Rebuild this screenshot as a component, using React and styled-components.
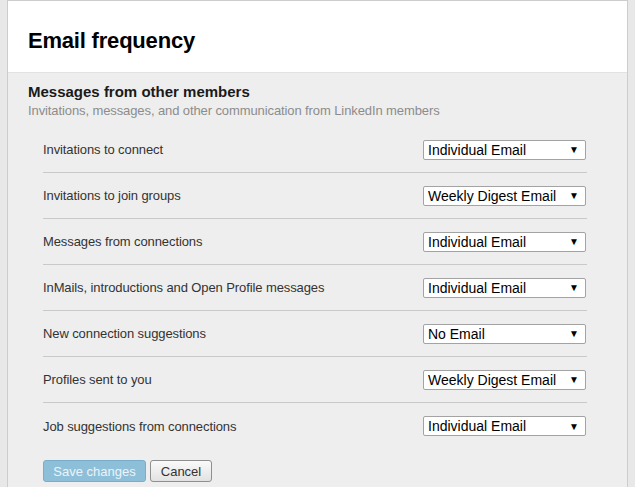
import React from "react";
import styled, { createGlobalStyle } from "styled-components";

const GlobalStyle = createGlobalStyle`
  html, body {
    margin: 0;
    padding: 0;
    background: #e6e6e6;
    font-family: Arial, "Liberation Sans", Helvetica, sans-serif;
  }
`;

const rows = [
  { label: "Invitations to connect", value: "Individual Email" },
  { label: "Invitations to join groups", value: "Weekly Digest Email" },
  { label: "Messages from connections", value: "Individual Email" },
  { label: "InMails, introductions and Open Profile messages", value: "Individual Email" },
  { label: "New connection suggestions", value: "No Email" },
  { label: "Profiles sent to you", value: "Weekly Digest Email" },
  { label: "Job suggestions from connections", value: "Individual Email" },
];

export default function App() {
  return (
    <>
      <GlobalStyle />
      <Page>
        <Panel>
          <Header>
            <Title>Email frequency</Title>
          </Header>
          <Section>
            <SectionTitle>Messages from other members</SectionTitle>
            <SectionSub>
              Invitations, messages, and other communication from LinkedIn members
            </SectionSub>
            <List>
              {rows.map((r, i) => (
                <Row key={r.label} last={i === rows.length - 1}>
                  <Label>{r.label}</Label>
                  <Select>
                    <span>{r.value}</span>
                    <Arrow>▼</Arrow>
                  </Select>
                </Row>
              ))}
            </List>
            <Actions>
              <SaveButton>Save changes</SaveButton>
              <CancelButton>Cancel</CancelButton>
            </Actions>
          </Section>
        </Panel>
      </Page>
    </>
  );
}

const Page = styled.div`
  width: 635px;
  height: 487px;
  overflow: hidden;
  padding-left: 7px;
  box-sizing: border-box;
  background: #e8e8e8;
`;

const Panel = styled.div`
  width: 621px;
  height: 100%;
  box-sizing: border-box;
  border: 1px solid #cdcdcd;
  border-bottom: none;
  background: #eeeeee;
  display: flex;
  flex-direction: column;
`;

const Header = styled.div`
  height: 72px;
  flex-shrink: 0;
  background: #ffffff;
  border-bottom: 1px solid #e2e2e2;
  display: flex;
  align-items: center;
  padding-left: 20px;
  box-sizing: border-box;
`;

const Title = styled.h1`
  margin: 0;
  font-size: 22px;
  font-weight: bold;
  color: #000;
  letter-spacing: -0.2px;
  padding-top: 8px;
`;

const Section = styled.div`
  padding: 10px 40px 0 20px;
`;

const SectionTitle = styled.div`
  font-size: 15px;
  font-weight: bold;
  color: #1a1a1a;
  line-height: 18px;
`;

const SectionSub = styled.div`
  font-size: 13px;
  color: #8c8c8c;
  line-height: 18px;
  margin-top: 1px;
  letter-spacing: -0.1px;
`;

const List = styled.div`
  margin-left: 15px;
  margin-top: 7px;
`;

const Row = styled.div`
  height: 46px;
  box-sizing: border-box;
  display: flex;
  align-items: center;
  justify-content: space-between;
  border-bottom: ${(p) => (p.last ? "none" : "1px solid #c9c9c9")};
`;

const Label = styled.div`
  font-size: 13px;
  color: #333;
  letter-spacing: -0.1px;
`;

const Select = styled.div`
  width: 163px;
  height: 20px;
  box-sizing: border-box;
  background: #fff;
  border: 1px solid #a3a3a3;
  border-radius: 2px;
  display: flex;
  align-items: center;
  justify-content: space-between;
  padding: 0 6px 0 4px;
  font-size: 14px;
  color: #000;
  margin-right: 1px;
`;

const Arrow = styled.span`
  font-size: 10px;
  color: #000;
`;

const Actions = styled.div`
  display: flex;
  gap: 4px;
  margin-left: 15px;
  margin-top: 11px;
`;

const BaseButton = styled.button`
  height: 22px;
  box-sizing: border-box;
  font-family: Arial, "Liberation Sans", sans-serif;
  font-size: 13px;
  border-radius: 3px;
  padding: 0;
  white-space: nowrap;
  cursor: pointer;
`;

const SaveButton = styled(BaseButton)`
  width: 103px;
  background: #8ebfd9;
  border: 1px solid #78aecb;
  color: #eaf4fa;
`;

const CancelButton = styled(BaseButton)`
  width: 62px;
  background: linear-gradient(#fafafa, #e2e2e2);
  border: 1px solid #8f8f8f;
  color: #333;
`;
